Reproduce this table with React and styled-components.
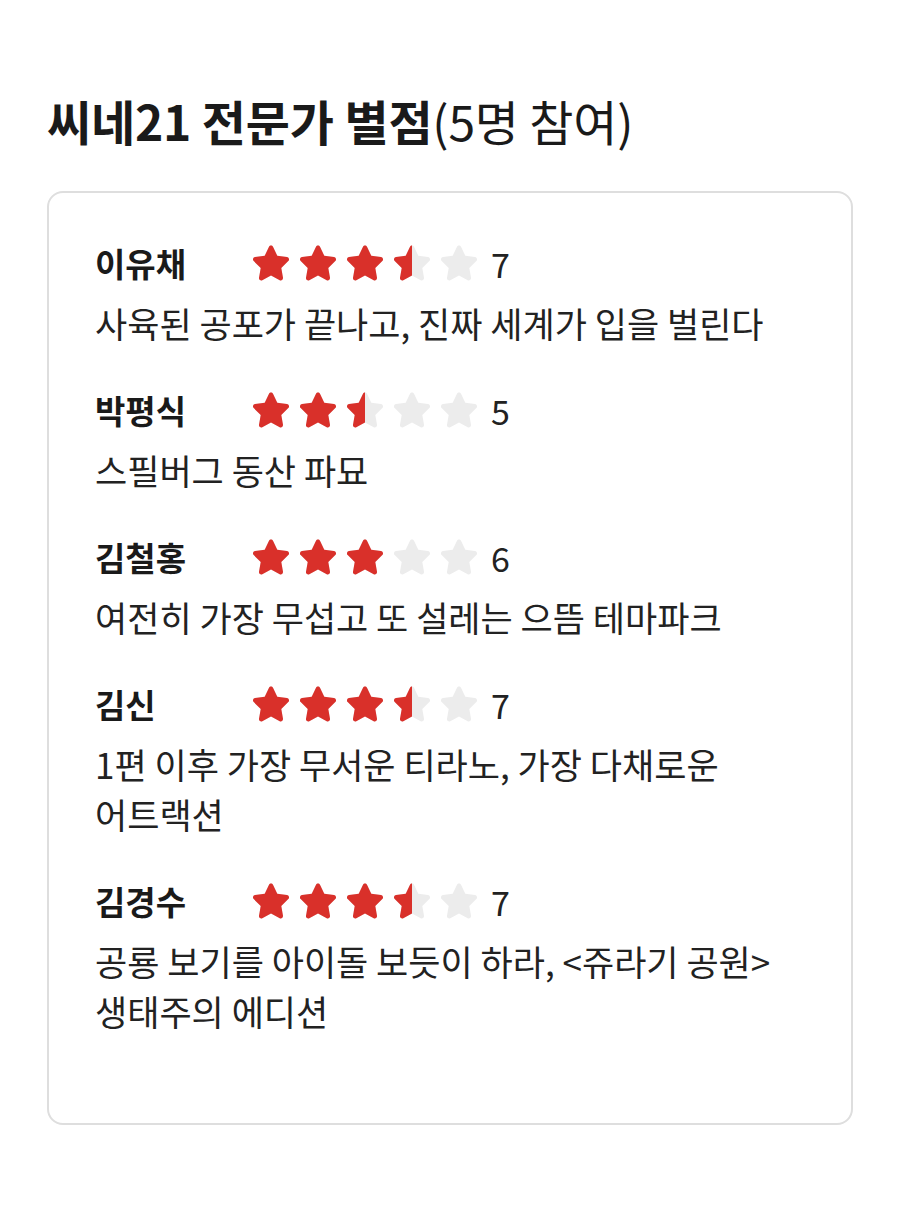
import React from 'react';
import styled, { createGlobalStyle } from 'styled-components';

const GlobalStyle = createGlobalStyle`
  body {
    margin: 0;
    background: #fff;
    font-family: "Noto Sans CJK KR", "Noto Sans", sans-serif;
    color: #222;
  }
`;

const reviews = [
  { name: '이유채', score: 7, text: '사육된 공포가 끝나고, 진짜 세계가 입을 벌린다' },
  { name: '박평식', score: 5, text: '스필버그 동산 파묘' },
  { name: '김철홍', score: 6, text: '여전히 가장 무섭고 또 설레는 으뜸 테마파크' },
  { name: '김신', score: 7, text: '1편 이후 가장 무서운 티라노, 가장 다채로운 어트랙션' },
  { name: '김경수', score: 7, text: '공룡 보기를 아이돌 보듯이 하라, <쥬라기 공원> 생태주의 에디션' },
];

const STAR_PATH =
  'M20 2.5c.9 0 1.6.5 2 1.3l4.3 8.9 9.7 1.4c.9.1 1.6.7 1.9 1.6.3.9 0 1.8-.6 2.4l-7 6.9 1.7 9.7c.1.9-.2 1.8-.9 2.3-.7.5-1.6.6-2.4.2L20 32.6l-8.7 4.6c-.8.4-1.7.3-2.4-.2-.7-.5-1.1-1.4-.9-2.3l1.7-9.7-7-6.9c-.7-.6-.9-1.5-.6-2.4.3-.9 1-1.5 1.9-1.6l9.7-1.4L18 3.8c.4-.8 1.1-1.3 2-1.3z';

const Star = ({ fill }) => (
  <StarBox>
    <svg width="40" height="40" viewBox="0 0 40 40">
      <path d={STAR_PATH} fill="#ececec" />
    </svg>
    {fill > 0 && (
      <StarFill style={{ width: `${fill * 100}%` }}>
        <svg width="40" height="40" viewBox="0 0 40 40">
          <path d={STAR_PATH} fill="#d9302a" />
        </svg>
      </StarFill>
    )}
  </StarBox>
);

const Stars = ({ score }) => {
  const value = score / 2;
  return (
    <StarRow>
      {[0, 1, 2, 3, 4].map((i) => (
        <Star key={i} fill={Math.max(0, Math.min(1, value - i))} />
      ))}
    </StarRow>
  );
};

const App = () => (
  <>
    <GlobalStyle />
    <Page>
      <Title>
        씨네21 전문가 별점<Count>(5명 참여)</Count>
      </Title>
      <Card>
        {reviews.map((r) => (
          <Review key={r.name}>
            <Head>
              <Name>{r.name}</Name>
              <Stars score={r.score} />
              <Score>{r.score}</Score>
            </Head>
            <Comment>{r.text}</Comment>
          </Review>
        ))}
      </Card>
    </Page>
  </>
);

export default App;

const Page = styled.main`
  padding: 90px 47px 90px;
`;

const Title = styled.h2`
  margin: 0 0 41px;
  font-size: 48px;
  font-weight: 700;
  line-height: 60px;
  letter-spacing: -0.2px;
  color: #1a1a1a;
`;

const Count = styled.span`
  font-weight: 400;
`;

const Card = styled.section`
  border: 2px solid #dedede;
  border-radius: 16px;
  padding: 45px 46px 87px;
  display: flex;
  flex-direction: column;
  gap: 37px;
`;

const Review = styled.article`
  display: flex;
  flex-direction: column;
  gap: 10px;
`;

const Head = styled.div`
  display: flex;
  align-items: center;
  height: 50px;
`;

const Name = styled.span`
  width: 158px;
  margin-right: -2px;
  font-size: 33px;
  font-weight: 700;
  color: #1a1a1a;
`;

const StarRow = styled.div`
  display: flex;
  gap: 7px;
`;

const StarBox = styled.span`
  position: relative;
  width: 40px;
  height: 40px;
  svg {
    display: block;
  }
`;

const StarFill = styled.span`
  position: absolute;
  top: 0;
  left: 0;
  height: 40px;
  overflow: hidden;
`;

const Score = styled.span`
  margin-left: 12px;
  font-size: 34px;
  color: #222;
`;

const Comment = styled.p`
  margin: 0;
  font-size: 35px;
  line-height: 50px;
  word-break: keep-all;
  color: #222;
`;
